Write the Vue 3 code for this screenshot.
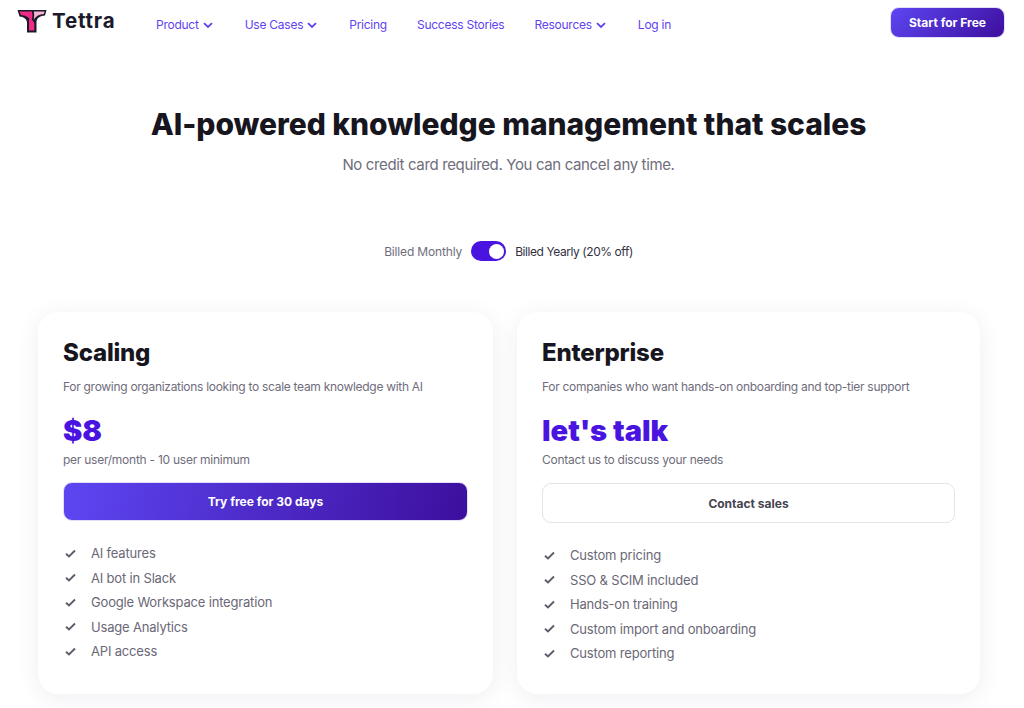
<script setup>
const nav = [
  { label: 'Product', caret: true },
  { label: 'Use Cases', caret: true },
  { label: 'Pricing' },
  { label: 'Success Stories' },
  { label: 'Resources', caret: true },
  { label: 'Log in' },
]
const plans = [
  {
    name: 'Scaling',
    desc: 'For growing organizations looking to scale team knowledge with AI',
    price: '$8',
    note: 'per user/month - 10 user minimum',
    cta: 'Try free for 30 days',
    primary: true,
    features: ['AI features', 'AI bot in Slack', 'Google Workspace integration', 'Usage Analytics', 'API access'],
  },
  {
    name: 'Enterprise',
    desc: 'For companies who want hands-on onboarding and top-tier support',
    price: "let's talk",
    note: 'Contact us to discuss your needs',
    cta: 'Contact sales',
    primary: false,
    features: ['Custom pricing', 'SSO & SCIM included', 'Hands-on training', 'Custom import and onboarding', 'Custom reporting'],
  },
]
</script>

<template>
  <div class="page">
    <header class="top">
      <div class="brand">
        <svg class="logo" viewBox="0 0 30 24" width="30" height="24">
          <path d="M0.5 1 H29.5 L28 6.5 Q20.5 7 19.5 12 V23.5 H10 V13 Q9 8 2.5 7.5 Z" fill="#1b1a2b" />
          <path d="M2.4 2.6 H15 Q16.2 7 14.6 12 Q11 6.2 4 5.9 Z" fill="#f02a85" />
          <path d="M12 9.5 Q16.5 11 17.3 14.5 V21.5 H12 Z" fill="#f02a85" />
          <path d="M16.8 2.6 H27.6 L26.8 5 Q20 5.4 16.8 10.5 Q17.8 6.5 16.8 2.6 Z" fill="#f7b3d4" />
        </svg>
        <span class="word">Tettra</span>
      </div>
      <nav class="nav">
        <a v-for="item in nav" :key="item.label" class="link">
          {{ item.label }}
          <svg v-if="item.caret" class="caret" viewBox="0 0 10 7" width="10" height="7">
            <path d="M1 1.2 L5 5 L9 1.2" fill="none" stroke="#5f43ee" stroke-width="1.8" />
          </svg>
        </a>
      </nav>
      <button class="start">Start for Free</button>
    </header>

    <section class="hero">
      <h1>AI-powered knowledge management that scales</h1>
      <p>No credit card required. You can cancel any time.</p>
    </section>

    <div class="billing">
      <span class="off">Billed Monthly</span>
      <span class="toggle"><span class="knob"></span></span>
      <span class="on">Billed Yearly (20% off)</span>
    </div>

    <section class="plans">
      <article v-for="plan in plans" :key="plan.name" class="card" :class="{ wide: !plan.primary }">
        <h2>{{ plan.name }}</h2>
        <p class="desc">{{ plan.desc }}</p>
        <div class="price">{{ plan.price }}</div>
        <p class="note">{{ plan.note }}</p>
        <button class="cta" :class="plan.primary ? 'solid' : 'ghost'">{{ plan.cta }}</button>
        <ul>
          <li v-for="f in plan.features" :key="f">
            <svg viewBox="0 0 12 10" width="11" height="9">
              <path d="M1 5.2 L4.3 8.2 L11 1.6" fill="none" stroke="#5f5d6b" stroke-width="2.2" />
            </svg>
            <span>{{ f }}</span>
          </li>
        </ul>
      </article>
    </section>
  </div>
</template>

<style>
html, body { margin: 0; background: #fff; }
</style>

<style scoped>
.page {
  height: 708px;
  overflow: hidden;
  font-family: Inter, "Noto Sans", sans-serif;
  background: #fff;
  box-sizing: border-box;
}
.top {
  display: flex;
  align-items: flex-start;
  padding: 7px 19px 0 17px;
  height: 50px;
  box-sizing: border-box;
}
.brand { display: flex; align-items: center; gap: 5px; width: 139px; height: 26px; margin-top: 1px; }
.word { font-size: 20.5px; font-weight: 700; color: #1b1a2b; letter-spacing: 0.8px; line-height: 26px; }
.nav { display: flex; gap: 30px; flex: 1; padding-top: 10px; }
.link { display: flex; align-items: center; gap: 4px; font-size: 12px; letter-spacing: -0.25px; color: #5f43ee; line-height: 16px; white-space: nowrap; }
.caret { margin-top: 1px; margin-right: 2px; }
.start {
  width: 115px; height: 31px; border: 1px solid #e2ddf9; border-radius: 9px;
  background: linear-gradient(135deg, #5d46f2, #3d0f9e);
  color: #fff; font: 700 12px Inter, sans-serif;
}
.hero { text-align: center; padding-right: 7px; }
h1 { margin: 0; padding-top: 55px; font-size: 30px; line-height: 38px; font-weight: 800; letter-spacing: -0.05px; color: #17161f; }
.hero p { margin: 12px 0 0; font-size: 15px; letter-spacing: -0.36px; line-height: 20px; color: #6f6d7b; }
.billing { display: flex; justify-content: center; align-items: center; gap: 9px; margin-top: 66px; padding-right: 7px; font-size: 12px; height: 20px; }
.off { color: #6f6d7b; letter-spacing: -0.15px; }
.on { color: #33323f; letter-spacing: -0.43px; }
.toggle { display: flex; justify-content: flex-end; align-items: center; width: 35px; height: 20px; padding: 0 2px; box-sizing: border-box; border-radius: 10px; background: #4a14e0; }
.knob { width: 15px; height: 15px; border-radius: 50%; background: #fff; }
.plans { display: flex; gap: 24px; padding: 0 44px 0 38px; margin-top: 51px; }
.card {
  flex: 455px 0 0;
  height: 382px;
  box-sizing: border-box;
  padding: 25px 25px;
  background: #fff;
  border-radius: 20px;
  box-shadow: 0 4px 24px rgba(30, 20, 70, 0.07);
}
.card.wide { flex-basis: 463px; }
h2 { margin: 0; font-size: 24px; letter-spacing: -0.2px; line-height: 32px; font-weight: 800; color: #17161f; }
.desc { margin: 10px 0 0; font-size: 12px; letter-spacing: -0.29px; line-height: 16px; color: #6f6d7b; white-space: nowrap; }
.price { margin-top: 16px; font-size: 29px; line-height: 40px; font-weight: 900; color: #4a14e0; }
.note { margin: 1px 0 0; font-size: 12px; letter-spacing: -0.25px; line-height: 16px; color: #6f6d7b; }
.cta { display: block; width: 100%; height: 39px; margin-top: 14px; border-radius: 9px; font: 700 12px Inter, sans-serif; }
.solid { border: 1px solid #e2ddf9; background: linear-gradient(100deg, #5d46f2, #3d0f9e); color: #fff; }
.ghost { height: 40px; margin-top: 15px; border: 1px solid #e4e4e8; background: #fff; color: #45444f; }
ul { list-style: none; margin: 20px 0 0; padding: 0; }
li { display: flex; align-items: center; gap: 15px; height: 24.5px; padding-left: 2px; font-size: 13px; letter-spacing: -0.18px; color: #6a6876; }
</style>
